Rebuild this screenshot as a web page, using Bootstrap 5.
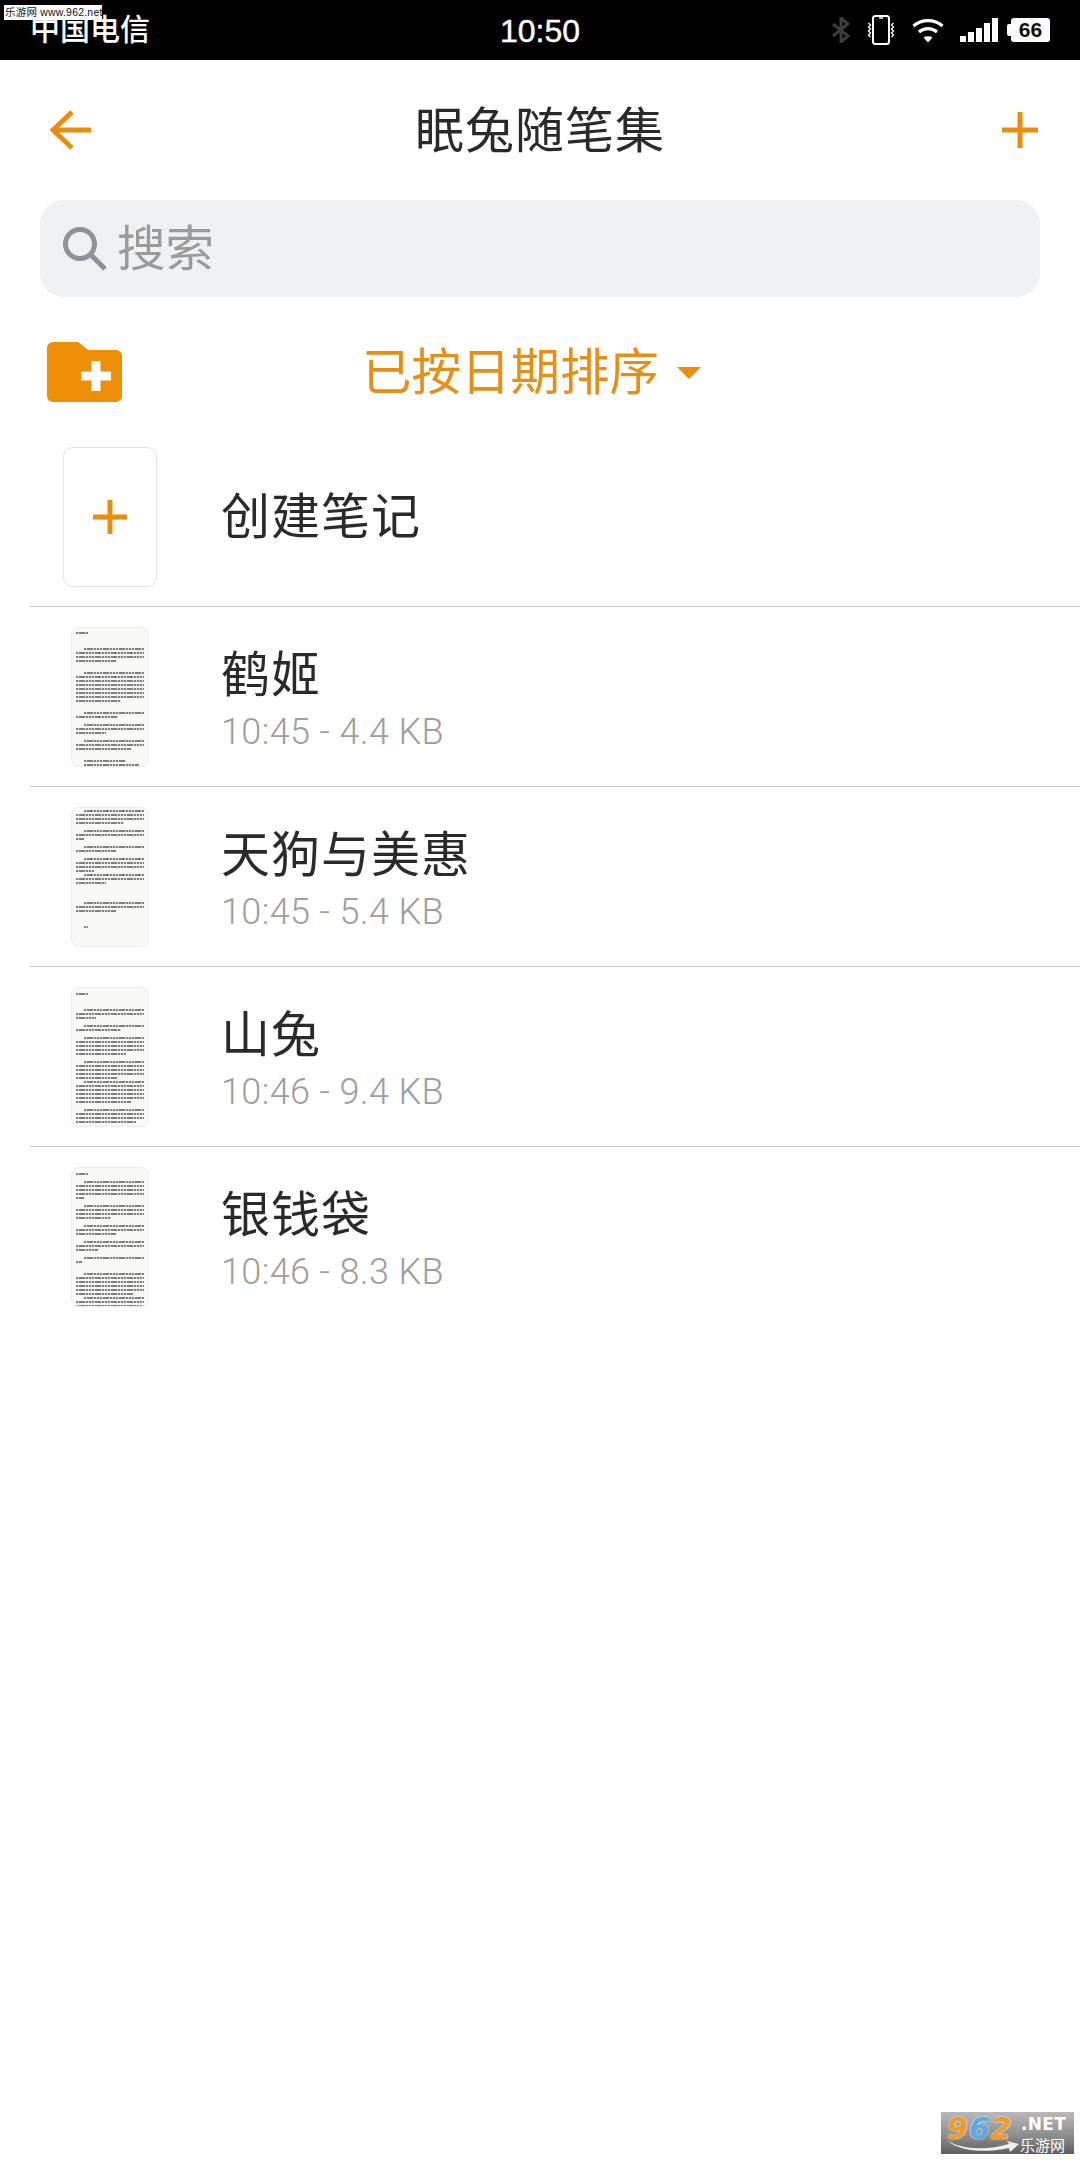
<!DOCTYPE html>
<html lang="zh-CN">
<head>
    <meta charset="UTF-8">
    <meta name="viewport" content="width=device-width, initial-scale=1.0">
    <title>眠兔随笔集</title>
    <link href="https://cdn.jsdelivr.net/npm/bootstrap@5.3.1/dist/css/bootstrap.min.css" rel="stylesheet">
    <style>
        body { width: 1080px; min-height: 2160px; background: #fff; position: relative; overflow: hidden;
            font-family: "Noto Sans CJK SC", "Liberation Sans", sans-serif; color: #2a2a2a; }
        .status-bar { height: 60px; background: #000; color: #fff; padding: 0 30px; position: relative; }
        .carrier { font-size: 30px; line-height: 1; font-weight: 500; margin-bottom: 6px; }
        .clock { position: absolute; left: 500px; top: 13px; font: 400 32px/36px "Liberation Sans", sans-serif; -webkit-text-stroke: .4px #fff; }
        .status-icons svg { display: block; }
        .batt-box { position: relative; width: 39px; height: 24px; margin-left: 13px; background: #fff; border-radius: 3px; color: #111;
            font: 700 21px/24px "Liberation Sans", sans-serif; text-align: center; }
        .batt-box::before { content: ""; position: absolute; left: -4px; top: 6px; width: 4px; height: 12px; background: #fff; border-radius: 2px 0 0 2px; }
        .mark-top { position: absolute; left: 4px; top: 5px; width: 98px; height: 15px; background: #fff; color: #111; white-space: nowrap;
            font: 400 10.5px/15px "Liberation Sans", "Noto Sans CJK SC", sans-serif; padding-left: 1px; letter-spacing: .2px; }
        .top-nav { height: 140px; padding: 0 42px 0 50px; position: relative; }
        .top-title { position: absolute; left: 0; right: 0; top: 0; line-height: 134px; text-align: center; font-size: 49px; letter-spacing: 1px; }
        .search-box { height: 97px; margin: 0 40px; background: #f0f1f3; border-radius: 24px; padding-left: 22px; color: #9b9b9b; font-size: 48.5px; }
        .search-box svg { margin-right: 9px; }
        .search-box span { margin-bottom: 6px; }
        .sort-row { height: 130px; padding: 20px 0 0 47px; }
        .sort-group { margin-left: 240px; color: #e58f14; font-size: 49.5px; line-height: 1; }
        .sort-group span { padding-bottom: 6px; }
        .caret-down { width: 0; height: 0; margin-left: 18px; margin-top: 2px; border-left: 12px solid transparent; border-right: 12px solid transparent; border-top: 12px solid #e98e0a; }
        .note-list { margin-left: 30px; }
        .note-row { height: 180px; border-bottom: 1px solid #cbcbcb; }
        .note-row:last-child { border-bottom: 0; }
        .thumb-slot { width: 159px; margin-right: 32px; }
        .add-thumb { width: 94px; height: 140px; border: 1px solid #e3e3e3; border-radius: 10px; }
        .doc-thumb { width: 78px; height: 140px; background: #f9f9f7; border: 1px solid #ececec; border-radius: 8px; overflow: hidden; padding: 0 4px; }
        .doc-line { height: 4px; padding-top: 1px; }
        .doc-line i { display: block; height: 2px; background: repeating-linear-gradient(90deg, #808080 0 2.4px, #d8d8d8 2.4px 3.2px); filter: blur(.35px); }
        .note-title { font-size: 49px; line-height: 60px; letter-spacing: 1px; }
        .note-title.solo { padding-bottom: 7px; }
        .note-meta { font: 300 36px/42px Roboto, "Liberation Sans", sans-serif; letter-spacing: .4px; color: #9e9e9e; margin-top: 10px; }
        .mark-bottom { position: absolute; left: 941px; top: 2112px; width: 133px; height: 42px; background: linear-gradient(#b9b9b9, #8e8e8e 55%, #5f5f5f); }
        .mark-num { position: absolute; left: 6px; top: 2px; font: italic 700 30px/30px "DejaVu Sans", sans-serif; letter-spacing: 1px; color: #f29a2e; text-shadow: 0 0 2px #fff; }
        .mark-num b { color: #5aa9e6; }
        .mark-net { position: absolute; left: 80px; top: 3px; font: 700 17px/18px "DejaVu Sans", sans-serif; color: #fff; letter-spacing: .3px; }
        .mark-name { position: absolute; left: 79px; top: 24px; font-size: 15px; line-height: 17px; color: #fff; }
        .mark-swoosh { position: absolute; left: 6px; top: 27px; }
    </style>
</head>
<body>
    <div class="status-bar d-flex align-items-center justify-content-between">
        <span class="carrier">中国电信</span>
        <span class="clock">10:50</span>
        <div class="status-icons d-flex align-items-center">
            <svg width="18" height="26" viewBox="0 0 18 26" fill="none" stroke="#3c3c3c" stroke-width="3"><path d="M1 7l15 12-7 6V1l7 6L1 19"/></svg>
            <svg class="ms-3" width="30" height="30" viewBox="0 0 30 30" fill="none" stroke="#fff"><rect x="7" y="1" width="16" height="28" rx="2.5" stroke-width="2"/><path d="M13 3h4" stroke-width="1.5"/><path d="M2.500 8l2 2-2 2 2 2-2 2 2 2-2 2 2 2M27.500 8l-2 2 2 2-2 2 2 2-2 2 2 2-2 2" stroke-width="1.3"/></svg>
            <svg class="ms-3" width="32" height="25" viewBox="0 0 32 25" fill="none" stroke="#fff" stroke-width="3.200"><path d="M1.500 8C9.500 .7 22.500 .7 30.500 8"/><path d="M7 14c5.500-4.500 12.500-4.500 18 0"/><path d="M16 24.500l-4.500-5c2.800-1.600 6.200-1.600 9 0z" fill="#fff" stroke="none"/></svg>
            <svg class="ms-3" width="38" height="25" viewBox="0 0 38 25" fill="#fff"><rect x="0" y="18" width="6" height="6"/><rect x="8" y="14" width="6" height="10"/><rect x="16" y="10" width="6" height="14"/><rect x="24" y="5" width="6" height="19"/><rect x="32" y="0" width="6" height="24"/></svg>
            <div class="batt-box">66</div>
        </div>
        <div class="mark-top">乐游网 www.962.net</div>
    </div>

    <div class="top-nav d-flex align-items-center justify-content-between">
        <svg width="42" height="40" viewBox="0 0 42 40" fill="none" stroke="#e98e0a" stroke-width="5"><path d="M22 2L3 20l19 18M3 20h38"/></svg>
        <div class="top-title">眠兔随笔集</div>
        <svg width="36" height="36" viewBox="0 0 36 36" fill="none" stroke="#e98e0a" stroke-width="5"><path d="M18 0v36M0 18h36"/></svg>
    </div>

    <div class="search-box d-flex align-items-center">
        <svg width="46" height="46" viewBox="0 0 46 46" fill="none" stroke="#8f9299"><circle cx="18" cy="18" r="14.500" stroke-width="5"/><path d="M28 28l15 15" stroke-width="5"/></svg>
        <span>搜索</span>
    </div>

    <div class="sort-row d-flex align-items-center">
        <svg width="75" height="60" viewBox="0 0 75 60"><path d="M6 0h25l10 8h28a6 6 0 0 1 6 6v40a6 6 0 0 1-6 6H6a6 6 0 0 1-6-6V6a6 6 0 0 1 6-6z" fill="#ec8e06"/><path d="M49 19v30M34 34h30" stroke="#fff" stroke-width="9"/></svg>
        <div class="sort-group d-flex align-items-center">
            <span>已按日期排序</span>
            <div class="caret-down"></div>
        </div>
    </div>

    <div class="note-list" id="note-list">
        <div class="note-row d-flex align-items-center">
            <div class="thumb-slot d-flex justify-content-center">
                <div class="add-thumb d-flex align-items-center justify-content-center">
                    <svg width="34" height="34" viewBox="0 0 34 34" fill="none" stroke="#e98e0a" stroke-width="5"><path d="M17 0v34M0 17h34"/></svg>
                </div>
            </div>
            <div class="note-title solo">创建笔记</div>
        </div>
    </div>

    <div class="mark-bottom">
        <div class="mark-num">9<b>6</b>2</div>
        <svg class="mark-swoosh" width="72" height="14" viewBox="0 0 72 14"><path d="M0 1c12 9 38 11 62 4l-2-3 12 3-9 8-1-4C40 14 12 13 0 1z" fill="#eee"/></svg>
        <div class="mark-net">.NET</div>
        <div class="mark-name">乐游网</div>
    </div>

    <script>
        // cada parrafo: [lineas en blanco antes, lineas, ancho de la ultima]
        const notas = [
            { titulo: "鹤姬", meta: "10:45 - 4.4 KB", top: 3, cabecera: true,
              parrafos: [[3,4,40],[2,8,45],[2,2,42],[1,3,30],[1,3,55],[2,1,42],[0,1,55]] },
            { titulo: "天狗与美惠", meta: "10:45 - 5.4 KB", top: 1, cabecera: false,
              parrafos: [[0,4,48],[1,3,8],[1,2,40],[1,4,18],[0,3,30],[4,3,40],[3,1,4]] },
            { titulo: "山兔", meta: "10:46 - 9.4 KB", top: 4, cabecera: true,
              parrafos: [[3,3,20],[1,2,45],[1,5,50],[1,5,42],[0,6,55],[1,4,60],[1,2,68]] },
            { titulo: "银钱袋", meta: "10:46 - 8.3 KB", top: 4, cabecera: true,
              parrafos: [[1,5,8],[1,4,35],[1,3,40],[1,3,22],[1,2,6],[2,6,58],[0,3,68]] }
        ];

        function lineaDoc(margen, ancho) {
            return `<div class="doc-line"><i style="margin-left:${margen}px;width:${ancho}px"></i></div>`;
        }

        function miniatura(nota) {
            let html = `<div style="height:${nota.top}px"></div>`;
            if (nota.cabecera) html += lineaDoc(0, 12);
            nota.parrafos.forEach(p => {
                for (let i = 0; i < p[0]; i++) html += '<div class="doc-line"></div>';
                for (let i = 0; i < p[1]; i++) {
                    if (i === p[1] - 1) html += lineaDoc(p[1] === 1 ? 8 : 0, p[2]);
                    else if (i === 0) html += lineaDoc(8, 60);
                    else html += lineaDoc(0, 68);
                }
            });
            return html;
        }

        const lista = document.getElementById("note-list");
        notas.forEach(nota => {
            lista.innerHTML += `
                <div class="note-row d-flex align-items-center">
                    <div class="thumb-slot d-flex justify-content-center">
                        <div class="doc-thumb">${miniatura(nota)}</div>
                    </div>
                    <div>
                        <div class="note-title">${nota.titulo}</div>
                        <div class="note-meta">${nota.meta}</div>
                    </div>
                </div>
            `;
        });
    </script>

    <script src="https://cdn.jsdelivr.net/npm/bootstrap@5.3.1/dist/js/bootstrap.bundle.min.js"></script>
</body>
</html>
